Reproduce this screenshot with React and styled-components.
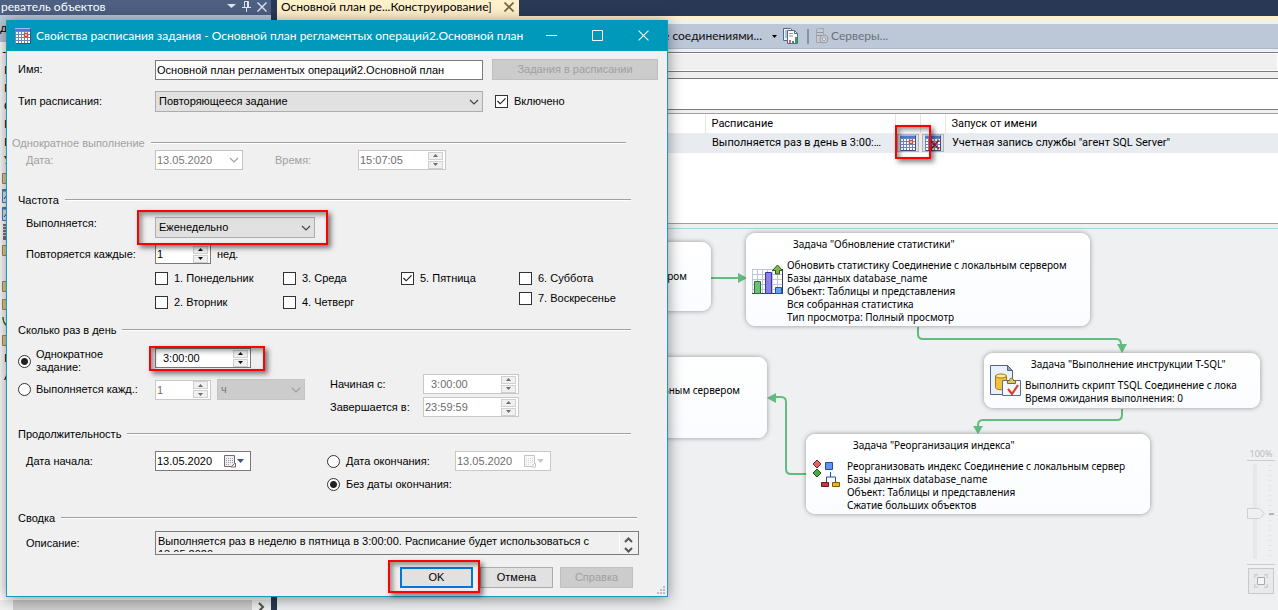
import React from "react";
import styled, { createGlobalStyle, css } from "styled-components";

const FORM = '"Liberation Sans", Arial, sans-serif';
const UI = 'Lato, "Open Sans", sans-serif';
const GRID = 'Roboto, "DejaVu Sans Condensed", sans-serif';
const NODE = '"Noto Sans", "DejaVu Sans Condensed", sans-serif';

const GlobalStyle = createGlobalStyle`
  *, *::before, *::after { box-sizing: border-box; }
  body { margin: 0; background: #293955; }
  button, input, select, textarea { font: inherit; color: inherit; margin: 0; padding: 0; border-radius: 0; }
  svg { display: block; flex: none; }
`;

/* ---------- workspace ---------- */

const Desktop = styled.div`
  position: relative;
  display: grid;
  grid-template-columns: 271px minmax(0, 1fr);
  column-gap: 6px;
  min-height: 100vh;
  overflow: hidden;
  background: #293955;
  font: 12px/14px ${UI};
  color: #000;
`;

const Explorer = styled.aside`
  display: flex;
  flex-direction: column;
  min-width: 0;
  background: #fff;
`;

const ExplorerTitle = styled.header`
  display: flex;
  align-items: center;
  gap: 6px;
  height: 15px;
  padding: 0 4px 2px 1px;
  background: #4d6082;
  color: #fff;
  line-height: 13px;
  white-space: nowrap;
`;

const TitleText = styled.span`
  flex: 1;
`;

const IconButton = styled.button`
  display: flex;
  border: 0;
  background: none;
`;

const ExplorerBar = styled.div`
  height: 27px;
  padding-top: 6px;
  background: #bcc7d8;
`;

const Tree = styled.ul`
  flex: 1;
  margin: 0;
  padding: 1px 0 0;
  list-style: none;
`;

const TreeItem = styled.li`
  display: flex;
  align-items: center;
  height: 18px;
  padding-left: ${(p) => (p.$icon ? 2 : 4)}px;
`;

const HScroll = styled.div`
  display: flex;
  align-items: center;
  height: 10px;
  padding-left: 13px;
  gap: 5px;
  background: #f0f0f0;
`;

const HThumb = styled.div`
  flex: 1;
  height: 10px;
  background: #cdcdcd;
`;

const Main = styled.main`
  display: flex;
  flex-direction: column;
  min-width: 0;
  background: #f0f0f0;
`;

const TabStrip = styled.nav`
  display: flex;
  height: 16px;
  background: #293955;
`;

const Tab = styled.div`
  display: flex;
  align-items: center;
  justify-content: space-between;
  width: 242px;
  padding: 0 5px 2px 4px;
  background: #fff0cc;
  white-space: nowrap;
`;

const TabUnderline = styled.div`
  height: 4px;
  background: #fff0cc;
`;

const Toolbar = styled.div`
  display: flex;
  align-items: center;
  gap: 6px;
  height: 25px;
  margin: 4px 0 3px;
  padding-left: 384px;
  border-bottom: 1px solid #aab6cb;
  background: #bcc7d8;
`;

const ToolButton = styled.button`
  display: flex;
  align-items: center;
  gap: ${(p) => p.$gap || 0}px;
  border: 0;
  background: none;
  white-space: nowrap;
  color: ${(p) => (p.disabled ? "#6d7178" : "#111")};
`;

const ToolLabel = styled.span`
  width: 101px;
  text-align: right;
`;

const ToolDivider = styled.div`
  width: 2px;
  height: 15px;
  margin-left: 2px;
  background: #8591a5;
`;

const PlanField = styled.input`
  display: block;
  width: 100%;
  height: ${(p) => p.$height}px;
  margin-bottom: ${(p) => p.$after}px;
  border: 1px solid #7a7a7a;
  border-width: 1px 0;
  background: ${(p) => (p.readOnly ? "#f0f0f0" : "#fff")};
  box-shadow: inset 0 0 0 1px #fff;
  outline: none;
`;

const PlansBox = styled.div`
  height: 111px;
  border: 1px solid #a0a0a0;
  border-width: 1px 0;
  background: #fff;
`;

const Plans = styled.table`
  width: 100%;
  table-layout: fixed;
  border-collapse: collapse;
  font: 11px/14px ${GRID};

  th, td {
    padding: 0 0 0 6px;
    text-align: left;
    font-weight: normal;
    white-space: nowrap;
  }
  th {
    height: 19px;
    border-right: 1px solid #e5e5e5;
  }
  th:last-child { border-right: 0; }
  td {
    height: 20px;
    padding-left: 7px;
    background: #e8ecf1;
  }
`;

const Col = styled.col`
  width: ${(p) => (p.$width ? p.$width + "px" : "auto")};
`;

const ButtonCell = styled.td`
  && { padding: 0 0 0 2px; }
`;

const GridButton = styled.button`
  display: flex;
  align-items: center;
  justify-content: center;
  width: 22px;
  height: 18px;
  border: 1px solid #b4b4b4;
  background: #e1e1e1;
`;

/* ---------- designer canvas ---------- */

const Canvas = styled.section`
  position: relative;
  flex: 1;
  margin-top: 4px;
  border-top: 1px solid #a9d3e2;
  background: #eff0f2;
  font: 10px/13px ${NODE};
`;

const Wires = styled.svg`
  position: absolute;
  left: 0;
  top: 0;
`;

const Node = styled.article`
  position: absolute;
  left: ${(p) => p.$x}px;
  top: ${(p) => p.$y}px;
  display: flex;
  align-items: center;
  gap: 3px;
  width: ${(p) => p.$w}px;
  height: ${(p) => p.$h}px;
  padding: 0 8px 0 6px;
  border-radius: 9px;
  background: linear-gradient(#fff, #fafcff);
  box-shadow: 0 0 5px rgba(0, 0, 0, 0.38);
  white-space: nowrap;
`;

const NodeTitle = styled.h3`
  margin: 0 0 8px 6px;
  font: inherit;
`;

const NodeText = styled.div`
  flex: 1;
  align-self: flex-start;
  padding-top: 5px;
`;

const NodeTail = styled.div`
  flex: 1;
  padding-right: ${(p) => p.$pad}px;
  padding-bottom: ${(p) => p.$lift || 0}px;
  text-align: right;
`;

const ZoomPanel = styled.div`
  position: absolute;
  right: 3px;
  bottom: 16px;
  display: flex;
  flex-direction: column;
  align-items: center;
  width: 28px;
  font-size: 9px;
  color: #b9bbbe;
`;

const ZoomTrack = styled.div`
  position: relative;
  width: 28px;
  height: 105px;
  margin-bottom: 3px;
  border: 1px solid #cbccce;
  border-width: 1px 0;
`;

const ZoomRange = styled.input`
  position: absolute;
  inset: 0;
  width: 28px;
  height: 103px;
  writing-mode: vertical-lr;
  opacity: 0;
`;

const FitButton = styled.button`
  display: flex;
  align-items: center;
  justify-content: center;
  width: 26px;
  height: 26px;
  border: 1px solid #c8c9cb;
  background: #e9eaec;
`;

/* ---------- dialog ---------- */

const Dialog = styled.div`
  position: absolute;
  left: 6px;
  top: 20px;
  width: 662px;
  border: 1px solid #1a9ab8;
  border-top: 0;
  background: #f0f0f0;
  box-shadow: 0 2px 14px rgba(0, 0, 0, 0.45);
  font: 11px/13px ${FORM};
`;

const DialogTitle = styled.header`
  display: flex;
  align-items: center;
  height: 31px;
  padding: 0 18px 0 8px;
  gap: 5px;
  background: #0099bc;
  color: #fff;
  font: 12px/16px ${UI};
  white-space: nowrap;
`;

const WindowButtons = styled.div`
  display: flex;
  margin-left: auto;
  gap: 35px;
`;

const DialogBody = styled.form`
  padding: 8px 9px 8px 11px;
`;

const Row = styled.div`
  display: flex;
  align-items: ${(p) => p.$align || "center"};
  margin-top: ${(p) => p.$top || 0}px;
  min-height: 20px;
`;

const Caption = styled.label`
  width: ${(p) => p.$width}px;
  padding-left: ${(p) => p.$indent || 0}px;
  color: ${(p) => (p.$off ? "#a0a0a0" : "#000")};
  white-space: nowrap;
`;

const Group = styled.fieldset`
  min-width: 0;
  margin: ${(p) => p.$top}px 0 0;
  padding: 0;
  border: 0;
`;

const GroupTitle = styled.legend`
  display: flex;
  align-items: center;
  gap: 6px;
  width: ${(p) => (p.$off ? "calc(100% + 6px)" : "100%")};
  height: 14px;
  padding: 0 ${(p) => p.$right}px 0 0;
  margin-left: ${(p) => (p.$off ? -6 : 0)}px;
  margin-bottom: ${(p) => p.$after}px;
  color: ${(p) => (p.$off ? "#a0a0a0" : "#000")};

  &::after {
    content: "";
    flex: 1;
    height: 2px;
    border-top: 1px solid #a0a0a0;
    border-bottom: 1px solid #fff;
  }
`;

const fieldLook = css`
  border: 1px solid ${(p) => (p.$off ? "#c8c8c8" : "#7a7a7a")};
  background: #fff;
  color: ${(p) => (p.$off ? "#6d6d6d" : "#000")};
`;

const TextBox = styled.input`
  ${fieldLook}
  width: 328px;
  height: 20px;
  padding: 0 1px;
  outline: none;
`;

const FieldFrame = styled.div`
  ${fieldLook}
  display: flex;
  align-items: center;
  width: ${(p) => p.$width}px;
  height: 20px;
  padding-right: ${(p) => p.$end || 2}px;
`;

const FieldInput = styled.input`
  flex: 1;
  min-width: 0;
  height: 16px;
  padding-left: ${(p) => (p.$shift ? 7 : 1)}px;
  border: 0;
  background: none;
  outline: none;
`;

const Arrows = styled.div`
  display: flex;
  flex-direction: column;
  gap: 1px;
`;

const Arrow = styled.button`
  display: flex;
  align-items: center;
  justify-content: center;
  width: 15px;
  height: 8px;
  border: 1px solid #d0d0d0;
  background: #f0f0f0;
  color: ${(p) => (p.$off ? "#6d6d6d" : "#111")};
`;

const SelectFrame = styled.div`
  position: relative;
  display: flex;
  align-items: center;
  width: ${(p) => p.$width}px;
  height: ${(p) => (p.$flat ? 20 : 21)}px;
  border: 1px solid ${(p) => (p.$off || p.$flat ? "#c4c4c4" : "#adadad")};
  background: ${(p) => (p.$flat ? "#fff" : p.$off ? "#cccccc" : "#e1e1e1")};
  color: ${(p) => (p.$off ? "#787878" : "#000")};

  > svg {
    position: absolute;
    right: 3px;
    pointer-events: none;
  }
`;

const Select = styled.select`
  width: 100%;
  height: 100%;
  padding-left: ${(p) => (p.$flat ? 1 : 3)}px;
  border: 0;
  background: none;
  color: inherit;
  opacity: 1;
  appearance: none;
  outline: none;
`;

const Choice = styled.label`
  display: flex;
  align-items: center;
  gap: ${(p) => p.$gap || 6}px;
  white-space: nowrap;
`;

const Tick = styled.input`
  position: relative;
  flex: none;
  width: 13px;
  height: 13px;
  border: 1px solid #333;
  background: #fff;
  appearance: none;

  &:checked::after {
    content: "";
    position: absolute;
    inset: 1px;
    background: #222;
    clip-path: polygon(0 50%, 10% 40%, 36% 66%, 90% 10%, 100% 20%, 36% 84%);
  }
`;

const Radio = styled.input`
  flex: none;
  width: 13px;
  height: 13px;
  border: 1px solid #333;
  border-radius: 50%;
  background: #fff;
  appearance: none;

  &:checked {
    background: radial-gradient(circle, #222 0 3px, #fff 4px);
  }
`;

const Days = styled.div`
  display: flex;
  margin: 8px 0 0 137px;
`;

const DayColumn = styled.div`
  display: flex;
  flex-direction: column;
  gap: ${(p) => p.$gap}px;
  width: ${(p) => p.$width}px;
`;

const Columns = styled.div`
  display: grid;
  grid-template-columns: ${(p) => p.$left}px 1fr;
  align-items: start;
`;

const Side = styled.div`
  display: flex;
  flex-direction: column;
  gap: ${(p) => p.$gap}px;
  padding-top: ${(p) => p.$top || 0}px;
`;

const Unit = styled.span`
  margin-left: ${(p) => p.$gap || 6}px;
`;

const Summary = styled.div`
  display: flex;
  width: 484px;
  height: 24px;
  padding: 1px;
  border: 1px solid #7a7a7a;
`;

const SummaryText = styled.textarea`
  flex: 1;
  height: 19px;
  padding: 2px 1px 0;
  border: 0;
  background: none;
  resize: none;
  overflow: hidden;
  outline: none;
`;

const SummaryScroll = styled.div`
  display: flex;
  flex-direction: column;
  align-items: center;
  justify-content: space-between;
  width: 18px;
  padding: 4px 1px 0 0;
  border-left: 1px solid #fff;
`;

const PushButton = styled.button`
  width: ${(p) => p.$width || 73}px;
  height: 21px;
  border: ${(p) => (p.$primary ? "2px solid #0078d7" : "1px solid #adadad")};
  background: #e1e1e1;

  &:disabled {
    border-color: #bfbfbf;
    background: #cccccc;
    color: #a0a0a0;
  }
`;

const Footer = styled.footer`
  display: flex;
  justify-content: flex-end;
  gap: 7px;
  margin-top: 12px;
  padding-right: 25px;
`;

const Grip = styled.svg`
  position: absolute;
  right: 1px;
  bottom: 1px;
`;

const Anchor = styled.div`
  position: relative;
`;

/* red frame laid over a control that the reader must look at */
const Highlight = styled.div`
  position: absolute;
  z-index: 2;
  left: ${(p) => p.$x}px;
  top: ${(p) => p.$y}px;
  width: ${(p) => p.$w}px;
  height: ${(p) => p.$h}px;
  border: 2px solid #fe0000;
  box-shadow: 3px 3px 5px rgba(0, 0, 0, 0.5), inset 3px 3px 5px rgba(0, 0, 0, 0.4);
  pointer-events: none;
`;

/* ---------- drawings ---------- */

const Cross = ({ size = 10, color = "#fff", width = 1 }) => (
  <svg width={size} height={size} viewBox="0 0 10 10" stroke={color} strokeWidth={width}>
    <path d="M0.5 0.5l9 9M9.5 0.5l-9 9" />
  </svg>
);

const Chevron = ({ color = "#444" }) => (
  <svg width="10" height="6" fill="none" stroke={color} strokeWidth="1.2">
    <path d="M1 1l4 4 4-4" />
  </svg>
);

const CalendarIcon = ({ cancelled }) => (
  <svg width="16" height="16" viewBox="0 0 16 16">
    <path d="M0 0h16v16H0z" fill="#6f86b8" />
    <path d="M15 1h1v15H1v-1h14z" fill="#3f4f78" />
    <path d="M0 0h15v3H0z" fill="#9dbcf2" />
    <path d="M0 1h15v2H0z" fill="#4a7ad6" />
    {[4, 7, 10, 13].map((y) =>
      [1, 4, 7, 10, 13].map((x) => (
        <rect key={x + "-" + y} x={x} y={y} width="2" height="2" fill="#fff" />
      ))
    )}
    {cancelled ? (
      <path d="M5 5l9 9M14 5l-8 9" stroke="#b01820" strokeWidth="1.6" />
    ) : (
      <path d="M9.500 5.500h3v3h-3z" fill="#fff" stroke="#e0482c" strokeWidth="1.4" />
    )}
  </svg>
);

const DropCalendar = ({ off }) => (
  <svg width="21" height="13" viewBox="0 0 21 13" opacity={off ? 0.4 : 1}>
    <path d="M.5.5h10v8l-3 3h-7z" fill="#f1eeee" stroke="#75696b" />
    <path d="M7 12h4.500V8" fill="none" stroke="#75696b" />
    <path d="M2 3.500h7M2 5.500h7M2 7.500h7M2 9.500h4" stroke="#94a1bd" strokeDasharray="1 1" />
    <path d="M13 4h7l-3.500 4z" fill={off ? "#777" : "#3e5187"} />
  </svg>
);

const ReportIcon = () => (
  <svg width="16" height="16" viewBox="0 0 16 16">
    <path d="M.5.5h7l3 3v9H.5z" fill="#eef3f8" stroke="#536a86" />
    <path d="M2 3h4M2 5h3M2 7h3M2 9h3" stroke="#7d91aa" />
    <path d="M4.500 2.500h7l3 3v10h-10z" fill="#fff" stroke="#536a86" />
    <path d="M11.500 2.500v3h3" fill="none" stroke="#536a86" />
    <path d="M6 5.500h4M6 8h4" stroke="#8397b0" />
    <path d="M6 12h2v3H6z" fill="#e2693c" />
    <path d="M9 13h2v2H9z" fill="#3b7de0" />
    <path d="M12 9h2v6h-2z" fill="#2ea84a" />
  </svg>
);

const ServerIcon = () => (
  <svg width="14" height="16" viewBox="0 0 14 16">
    <path d="M1.500 1.500l2-1h5v14h-7z" fill="#c6c9cd" stroke="#a2a6ac" />
    <path d="M2 4.500h6M2 7.500h6" stroke="#94989e" />
    <circle cx="9" cy="11" r="4" fill="#c9cbcf" stroke="#989ca3" />
    <circle cx="9" cy="11" r="1.500" fill="#fff" stroke="#989ca3" />
  </svg>
);

const StatsIcon = () => (
  <svg width="32" height="32" viewBox="0 0 32 32">
    <path d="M0 5h31v25H0z" fill="#fff" />
    <path d="M.5 5v25M5.500 5v25M10.500 5v25M15.500 5v25M20.500 5v25M25.500 5v25M0 5.500h31M0 10.500h31M0 15.500h31M0 20.500h31M0 25.500h31" stroke="#bcc5da" />
    <path d="M30.500 5v25M0 29.500h31" stroke="#314064" />
    <path d="M2.500 17.500h6v12h-6z" fill="#6dc070" stroke="#286f36" />
    <path d="M13.500 8.500h6v21h-6z" fill="#8a80e8" stroke="#3a35a0" />
    <path d="M23.500 23.500h6v6h-6z" fill="#5fa0ff" stroke="#1f50c0" />
    <path d="M25.500 1l5 5.500h-3v3.500h-4V6.500h-3z" fill="#75c043" stroke="#35502c" />
  </svg>
);

const ScriptIcon = () => (
  <svg width="32" height="32" viewBox="0 0 32 32">
    <path d="M.5.5h17l5 5v24H.5z" fill="#e9f1fd" stroke="#53647f" />
    <path d="M17.500.5v5h5z" fill="#8fa2c2" stroke="#53647f" />
    <path d="M5.500 11v11.500c0 3 11 3 11 0V11z" fill="#f1c33a" stroke="#a87912" />
    <ellipse cx="11" cy="11" rx="5.500" ry="2" fill="#ffeb9a" stroke="#a87912" />
    <path d="M12.500 15.500h18v15h-18z" fill="#f4f7ff" stroke="#5b6d93" />
    <path d="M17.500 18.500v-3h2c0-3 4-3 4 0h2v3z" fill="#d8c56a" stroke="#7d6a20" />
    <path d="M18 24l4 5 6-9" fill="none" stroke="#d8402a" strokeWidth="2.200" />
  </svg>
);

const IndexIcon = () => (
  <svg width="32" height="32" viewBox="0 0 32 32">
    <path d="M5 2l4 4-4 4-4-4z" fill="#e06464" stroke="#7d2323" />
    <path d="M5 11l4 4-4 4-4-4z" fill="#52a83a" stroke="#1f5217" />
    <path d="M13.500 4.500h7v7h-7z" fill="#5a95f5" stroke="#234a9c" />
    <path d="M18.500 14v5M14.500 24v-5h9v5" fill="none" stroke="#2450a8" />
    <path d="M9.500 24.500h7v4h-7z" fill="#d03535" stroke="#701717" />
    <path d="M20.500 24.500h7v4h-7z" fill="#f0b21a" stroke="#7d5a08" />
  </svg>
);

const FolderIcon = () => (
  <svg width="14" height="14">
    <path d="M.5 2.500h5l1 1h7v9H.5z" fill="#e5cf8e" stroke="#9a8b60" />
  </svg>
);

const ChartIcon = () => (
  <svg width="14" height="14">
    <path d="M.5.5h13v13H.5z" fill="#dcebff" stroke="#4a7fc4" />
    <path d="M0 1.500h14" stroke="#4a7fc4" strokeWidth="2" />
    <path d="M2 10l3-4 3 3 4-5" fill="none" stroke="#2c4a80" />
  </svg>
);

const ServerTreeIcon = () => (
  <svg width="14" height="16">
    <path d="M1 0h8v16H1z" fill="#777" />
    <path d="M1 2.500h8M1 5.500h8M1 8.500h8M1 11.500h8" stroke="#ddd" />
  </svg>
);

const ReplicationIcon = () => (
  <svg width="14" height="14">
    <path d="M1 2c0 6 3 8 8 8V7l4 4-4 3v-2C4 12 1 9 1 2z" fill="#3f9a3a" stroke="#2b6b28" />
  </svg>
);

/* ---------- parts ---------- */

function Spinner({ label, value, width, off, shift }) {
  return (
    <FieldFrame $width={width} $off={off}>
      <FieldInput id={label} aria-label={label} defaultValue={value} disabled={off} $shift={shift} />
      <Arrows>
        <Arrow type="button" aria-label="Больше" $off={off}>
          <svg width="5" height="3"><path d="M2.500 0L5 3H0z" fill="currentColor" /></svg>
        </Arrow>
        <Arrow type="button" aria-label="Меньше" $off={off}>
          <svg width="5" height="3"><path d="M0 0h5L2.500 3z" fill="currentColor" /></svg>
        </Arrow>
      </Arrows>
    </FieldFrame>
  );
}

function Dropdown({ label, value, width, off, flat }) {
  return (
    <SelectFrame $width={width} $off={off} $flat={flat}>
      <Select id={label} aria-label={label} disabled={off} $flat={flat}>
        <option>{value}</option>
      </Select>
      <Chevron color={off ? "#a0a0a0" : "#444"} />
    </SelectFrame>
  );
}

function DateField({ label, value, off }) {
  return (
    <FieldFrame $width={96} $off={off} $end={5}>
      <FieldInput id={label} aria-label={label} defaultValue={value} disabled={off} />
      <IconButton type="button" aria-label="Календарь">
        <DropCalendar off={off} />
      </IconButton>
    </FieldFrame>
  );
}

function Day({ children, checked }) {
  return (
    <Choice>
      <Tick type="checkbox" defaultChecked={checked} />
      {children}
    </Choice>
  );
}

const treeRows = ["-С", "Г", "Г", "С", "Г", "Г", "У", FolderIcon, ChartIcon, ChartIcon, ServerTreeIcon, FolderIcon, "", FolderIcon, FolderIcon, ReplicationIcon, FolderIcon, "Г", "А"];

function ObjectExplorer() {
  return (
    <Explorer>
      <ExplorerTitle>
        <TitleText>реватель объектов</TitleText>
        <IconButton aria-label="Меню"><svg width="9" height="5"><path d="M0 0h9L4.500 4z" fill="#dfe4ee" /></svg></IconButton>
        <IconButton aria-label="Закрепить">
          <svg width="9" height="11" fill="none" stroke="#dfe4ee"><path d="M2.500 6V.5h4V6M5.500 0v6M0 6.500h9M4.500 7v4" /></svg>
        </IconButton>
        <IconButton aria-label="Закрыть"><Cross color="#dfe4ee" width={1.4} /></IconButton>
      </ExplorerTitle>
      <ExplorerBar>ди</ExplorerBar>
      <Tree>
        {treeRows.map((Item, i) => (
          <TreeItem key={i} $icon={typeof Item !== "string" || Item === "-С"}>
            {typeof Item === "string" ? Item : <Item />}
          </TreeItem>
        ))}
      </Tree>
      <HScroll>
        <HThumb />
        <svg width="14" height="10" fill="none" stroke="#505050" strokeWidth="2"><path d="M2 3l4 4-4 4" /></svg>
      </HScroll>
    </Explorer>
  );
}

function Designer() {
  return (
    <Canvas>
      <Wires width="900" height="300" fill="none" stroke="#63bb80" strokeWidth="2">
        <path d="M434 49h28" />
        <path d="M641 98v7q0 5 5 5h193q5 0 5 5v4" />
        <path d="M845 180v6q0 5-5 5H706q-5 0-5 5v4" />
        <path d="M529 245h-15q-5 0-5-5v-67q0-5-5-5h-8" />
        <g fill="#63bb80" stroke="none">
          <path d="M461 44v10l9-5z" />
          <path d="M840 115h10l-5 9z" />
          <path d="M696 197h10l-5 8z" />
          <path d="M499 164v10l-9-5z" />
        </g>
      </Wires>
      <Node $x={340} $y={13} $w={94} $h={69}>
        <NodeTail $pad={16}>ером</NodeTail>
      </Node>
      <Node $x={340} $y={128} $w={150} $h={81}>
        <NodeTail $pad={19} $lift={14}>ьным сервером</NodeTail>
      </Node>
      <Node $x={469} $y={4} $w={344} $h={93}>
        <StatsIcon />
        <NodeText>
          <NodeTitle>Задача "Обновление статистики"</NodeTitle>
          Обновить статистику Соединение с локальным сервером<br />
          Базы данных database_name<br />
          Объект: Таблицы и представления<br />
          Вся собранная статистика<br />
          Тип просмотра: Полный просмотр
        </NodeText>
      </Node>
      <Node $x={707} $y={124} $w={276} $h={55}>
        <ScriptIcon />
        <NodeText>
          <NodeTitle>Задача "Выполнение инструкции T-SQL"</NodeTitle>
          Выполнить скрипт TSQL Соединение с лока<br />
          Время ожидания выполнения: 0
        </NodeText>
      </Node>
      <Node $x={529} $y={205} $w={344} $h={80}>
        <IndexIcon />
        <NodeText>
          <NodeTitle>Задача "Реорганизация индекса"</NodeTitle>
          Реорганизовать индекс Соединение с локальным сервер<br />
          Базы данных database_name<br />
          Объект: Таблицы и представления<br />
          Сжатие больших объектов
        </NodeText>
      </Node>
      <ZoomPanel>
        100%
        <ZoomTrack>
          <svg width="28" height="103">
            <rect x="6" y="3" width="4" height="95" rx="2" fill="#e6e7e9" />
            <path d="M23 4v94" stroke="#e2e3e5" strokeWidth="3" strokeDasharray="1 4" />
            <path d="M.5 47.500h12l5 5-5 5H.5z" fill="#eff0f2" stroke="#cfd0d2" />
            <path d="M22 52h5v2h-5z" fill="#b4b5b7" />
          </svg>
          <ZoomRange type="range" aria-label="Масштаб" defaultValue="50" />
        </ZoomTrack>
        <FitButton aria-label="По размеру">
          <svg width="14" height="14" fill="none">
            <path d="M0 4V0h4M10 0h4v4M14 10v4h-4M4 14H0v-4" stroke="#cfd0d2" strokeWidth="3" />
            <path d="M3.500 3.500h7v7h-7z" fill="#f6f6f8" stroke="#a9aaac" />
          </svg>
        </FitButton>
      </ZoomPanel>
    </Canvas>
  );
}

function Workspace() {
  return (
    <Main>
      <TabStrip>
        <Tab>
          Основной план ре...Конструирование]
          <IconButton aria-label="Закрыть вкладку"><Cross color="#75633d" width={1.6} /></IconButton>
        </Tab>
      </TabStrip>
      <TabUnderline />
      <Toolbar>
        <ToolButton $gap={10}>
          <ToolLabel>е соединениями...</ToolLabel>
          <svg width="5" height="3"><path d="M0 0h5L2.500 3z" fill="#000" /></svg>
        </ToolButton>
        <ToolButton aria-label="Отчет"><ReportIcon /></ToolButton>
        <ToolDivider />
        <ToolButton disabled $gap={2}><ServerIcon />Серверы...</ToolButton>
      </Toolbar>
      <PlanField aria-label="Имя плана" readOnly $height={20} $after={6} />
      <PlanField aria-label="Описание плана" $height={32} $after={3} />
      <PlansBox>
        <Plans>
          <colgroup>
            <Col $width={428} /><Col $width={190} /><Col $width={25} /><Col $width={25} /><Col />
          </colgroup>
          <thead>
            <tr><th /><th>Расписание</th><th /><th /><th>Запуск от имени</th></tr>
          </thead>
          <tbody>
            <tr>
              <td />
              <td>Выполняется раз в день в 3:00:…</td>
              <ButtonCell>
                <Anchor>
                  <GridButton aria-label="Расписание"><CalendarIcon /></GridButton>
                  <Highlight $x={-2} $y={-9} $w={36} $h={34} />
                </Anchor>
              </ButtonCell>
              <ButtonCell>
                <GridButton aria-label="Удалить расписание"><CalendarIcon cancelled /></GridButton>
              </ButtonCell>
              <td>Учетная запись службы "агент SQL Server"</td>
            </tr>
          </tbody>
        </Plans>
      </PlansBox>
      <Designer />
    </Main>
  );
}

function ScheduleDialog() {
  return (
    <Dialog role="dialog">
      <DialogTitle>
        <CalendarIcon />
        Свойства расписания задания - Основной план регламентых операций2.Основной план
        <WindowButtons>
          <IconButton aria-label="Свернуть"><svg width="11" height="11" stroke="#fff"><path d="M0 5.500h11" /></svg></IconButton>
          <IconButton aria-label="Развернуть"><svg width="11" height="11" fill="none" stroke="#fff"><path d="M.5.500h10v10H.5z" /></svg></IconButton>
          <IconButton aria-label="Закрыть"><Cross size={11} /></IconButton>
        </WindowButtons>
      </DialogTitle>
      <DialogBody onSubmit={(e) => e.preventDefault()}>
        <Row>
          <Caption htmlFor="name" $width={137}>Имя:</Caption>
          <TextBox id="name" defaultValue="Основной план регламентых операций2.Основной план" />
          <Unit $gap={9} />
          <PushButton type="button" disabled $width={166}>Задания в расписании</PushButton>
        </Row>
        <Row $top={11}>
          <Caption htmlFor="Тип расписания" $width={137}>Тип расписания:</Caption>
          <Dropdown label="Тип расписания" value="Повторяющееся задание" width={328} />
          <Unit $gap={12} />
          <Choice><Tick type="checkbox" defaultChecked />Включено</Choice>
        </Row>

        <Group $top={24}>
          <GroupTitle $off $right={32} $after={0}>Однократное выполнение</GroupTitle>
          <Row>
            <Caption $off htmlFor="Дата" $width={137} $indent={8}>Дата:</Caption>
            <Dropdown label="Дата" value="13.05.2020" width={88} off flat />
            <Caption $off htmlFor="Время" $width={115} $indent={32}>Время:</Caption>
            <Spinner label="Время" value="15:07:05" width={88} off />
          </Row>
        </Group>

        <Group $top={23}>
          <GroupTitle $right={27} $after={10}>Частота</GroupTitle>
          <Row $align="flex-start">
            <Caption htmlFor="Выполняется" $width={137} $indent={8}>Выполняется:</Caption>
            <Anchor>
              <Dropdown label="Выполняется" value="Еженедельно" width={160} />
              <Highlight $x={-18} $y={-7} $w={191} $h={35} />
            </Anchor>
          </Row>
          <Row $top={6}>
            <Caption htmlFor="Повторяется каждые" $width={137} $indent={8}>Повторяется каждые:</Caption>
            <Spinner label="Повторяется каждые" value="1" width={56} />
            <Unit>нед.</Unit>
          </Row>
          <Days>
            <DayColumn $gap={11} $width={128}><Day>1. Понедельник</Day><Day>2. Вторник</Day></DayColumn>
            <DayColumn $gap={11} $width={118}><Day>3. Среда</Day><Day>4. Четверг</Day></DayColumn>
            <DayColumn $gap={11} $width={118}><Day checked>5. Пятница</Day></DayColumn>
            <DayColumn $gap={7} $width={118}><Day>6. Суббота</Day><Day>7. Воскресенье</Day></DayColumn>
          </Days>
        </Group>

        <Group $top={14}>
          <GroupTitle $right={27} $after={11}>Сколько раз в день</GroupTitle>
          <Columns $left={312}>
            <Side $gap={3}>
              <Row $align="flex-start">
                <Caption as="div" $width={137}>
                  <Choice $gap={5}>
                    <Radio type="radio" name="daily" defaultChecked />
                    <span>Однократное<br />задание:</span>
                  </Choice>
                </Caption>
                <Anchor>
                  <Spinner label="Время запуска" value="3:00:00" width={96} shift />
                  <Highlight $x={-6} $y={-2} $w={116} $h={25} />
                </Anchor>
              </Row>
              <Row $top={2}>
                <Caption as="div" $width={137}>
                  <Choice $gap={5}><Radio type="radio" name="daily" />Выполняется кажд.:</Choice>
                </Caption>
                <Spinner label="Интервал" value="1" width={56} off />
                <Unit />
                <Dropdown label="Единица" value="ч" width={88} off />
              </Row>
            </Side>
            <Side $gap={3} $top={26}>
              <Row>
                <Caption htmlFor="Начиная с" $width={93}>Начиная с:</Caption>
                <Spinner label="Начиная с" value="3:00:00" width={96} off shift />
              </Row>
              <Row>
                <Caption htmlFor="Завершается в" $width={93}>Завершается в:</Caption>
                <Spinner label="Завершается в" value="23:59:59" width={96} off />
              </Row>
            </Side>
          </Columns>
        </Group>

        <Group $top={10}>
          <GroupTitle $right={27} $after={10}>Продолжительность</GroupTitle>
          <Columns $left={309}>
            <Row>
              <Caption htmlFor="Дата начала" $width={137} $indent={8}>Дата начала:</Caption>
              <DateField label="Дата начала" value="13.05.2020" />
            </Row>
            <Side $gap={7}>
              <Row>
                <Caption as="div" $width={128}>
                  <Choice><Radio type="radio" name="end" />Дата окончания:</Choice>
                </Caption>
                <DateField label="Дата окончания" value="13.05.2020" off />
              </Row>
              <Choice><Radio type="radio" name="end" defaultChecked />Без даты окончания:</Choice>
            </Side>
          </Columns>
        </Group>

        <Group $top={20}>
          <GroupTitle $right={21} $after={6}>Сводка</GroupTitle>
          <Row>
            <Caption htmlFor="summary" $width={137} $indent={8}>Описание:</Caption>
            <Summary>
              <SummaryText id="summary" readOnly defaultValue={"Выполняется раз в неделю в пятница в 3:00:00. Расписание будет использоваться с\n13.05.2020."} />
              <SummaryScroll>
                <svg width="9" height="6" fill="none" stroke="#555" strokeWidth="2"><path d="M1 5l3.500-3.500L8 5" /></svg>
                <svg width="9" height="6" fill="none" stroke="#555" strokeWidth="2"><path d="M1 1l3.500 3.500L8 1" /></svg>
              </SummaryScroll>
            </Summary>
          </Row>
        </Group>

        <Footer>
          <Anchor>
            <PushButton $primary>OK</PushButton>
            <Highlight $x={-12} $y={-7} $w={92} $h={33} />
          </Anchor>
          <PushButton type="button">Отмена</PushButton>
          <PushButton type="button" disabled>Справка</PushButton>
        </Footer>
      </DialogBody>
      <Grip width="9" height="9" fill="#bcbcbc">
        <path d="M6 0h2v2H6zM3 3h2v2H3zM6 3h2v2H6zM0 6h2v2H0zM3 6h2v2H3zM6 6h2v2H6z" />
      </Grip>
    </Dialog>
  );
}

export default function App() {
  return (
    <>
      <GlobalStyle />
      <Desktop>
        <ObjectExplorer />
        <Workspace />
        <ScheduleDialog />
      </Desktop>
    </>
  );
}
